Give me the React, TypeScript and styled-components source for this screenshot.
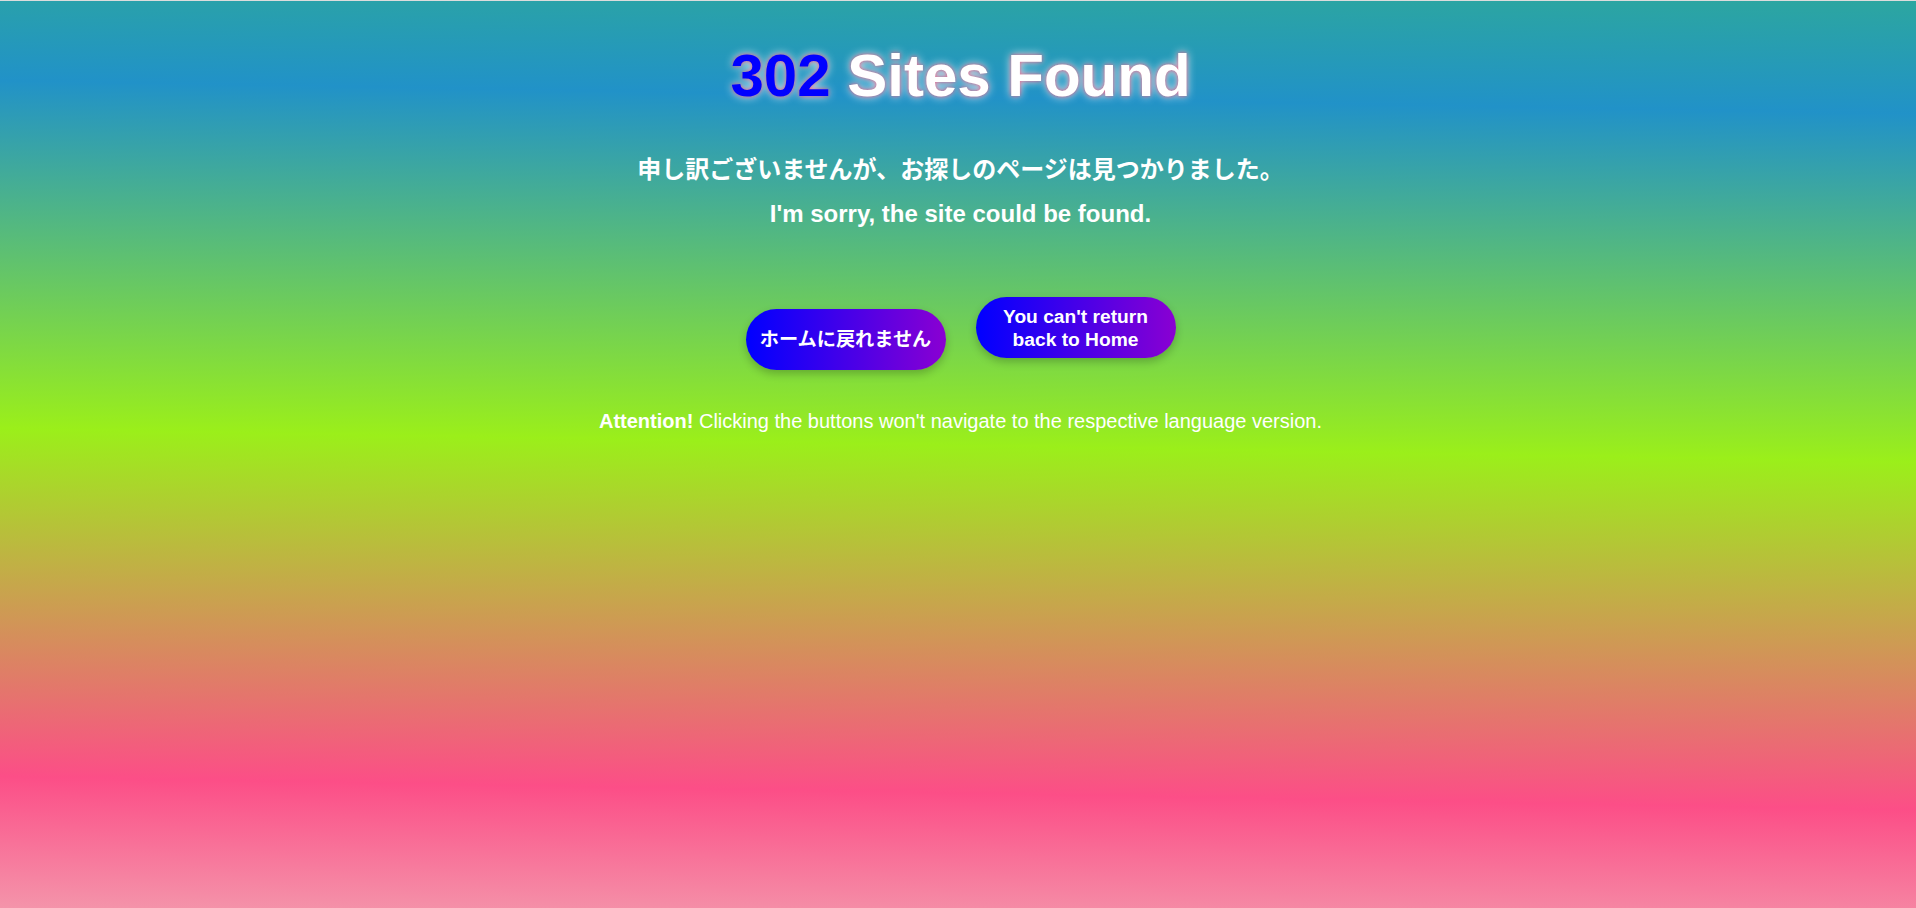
import React from "react";
import styled, { createGlobalStyle } from "styled-components";

const GlobalStyle = createGlobalStyle`
  html, body {
    margin: 0;
    padding: 0;
  }
  body {
    font-family: "Liberation Sans", Arial, "Noto Sans CJK JP", sans-serif;
    color: #fff;
  }
`;

const Page = styled.div`
  min-height: 100vh;
  box-sizing: border-box;
  border-top: 1px solid #dcdcdc;
  padding: 40px 0 0 5px;
  display: flex;
  flex-direction: column;
  align-items: center;
  background: linear-gradient(
    181deg,
    #2ca6a0 0%,
    #2192c8 12%,
    #9bef1a 49%,
    #fc4e87 86%,
    #f494aa 100%
  );
`;

const Title = styled.h1`
  margin: 0;
  font-size: 60px;
  line-height: 70px;
  font-weight: 700;
  color: #fff;
  text-shadow: 0 0 4px rgba(255, 0, 60, 0.6), 0 0 10px #fff;
`;

const Code = styled.span`
  color: #0000ff;
`;

const Message = styled.h2<{ $jp?: boolean }>`
  margin: ${(p) => (p.$jp ? "42px 0 0" : "13px 0 0")};
  font-size: 24px;
  line-height: ${(p) => (p.$jp ? "34px" : "28px")};
  font-weight: 700;
`;

const ButtonRow = styled.div`
  margin-top: 69px;
  text-align: center;
`;

const HomeButton = styled.a<{ $lines: number }>`
  display: inline-block;
  vertical-align: baseline;
  box-sizing: border-box;
  width: 200px;
  height: 61px;
  margin: 0 15px;
  padding: ${(p) => (61 - p.$lines * 23) / 2}px 10px 0;
  border-radius: 31px;
  background: linear-gradient(to right, #0000ff, #8a00d2);
  box-shadow: 0 4px 8px rgba(0, 0, 0, 0.22);
  color: #fff;
  font-size: 19.2px;
  line-height: 23px;
  font-weight: 700;
  text-align: center;
  text-decoration: none;
  cursor: pointer;
`;

const Note = styled.p`
  margin: 40px 0 0;
  font-size: 20px;
  line-height: 23px;
`;

export default function App() {
  return (
    <>
      <GlobalStyle />
      <Page>
        <Title>
          <Code>302</Code> Sites Found
        </Title>
        <Message $jp>申し訳ございませんが、お探しのページは見つかりました。</Message>
        <Message>I'm sorry, the site could be found.</Message>
        <ButtonRow>
          <HomeButton $lines={1}>ホームに戻れません</HomeButton>
          <HomeButton $lines={2}>You can't return back to Home</HomeButton>
        </ButtonRow>
        <Note>
          <strong>Attention!</strong> Clicking the buttons won't navigate to the respective language version.
        </Note>
      </Page>
    </>
  );
}
